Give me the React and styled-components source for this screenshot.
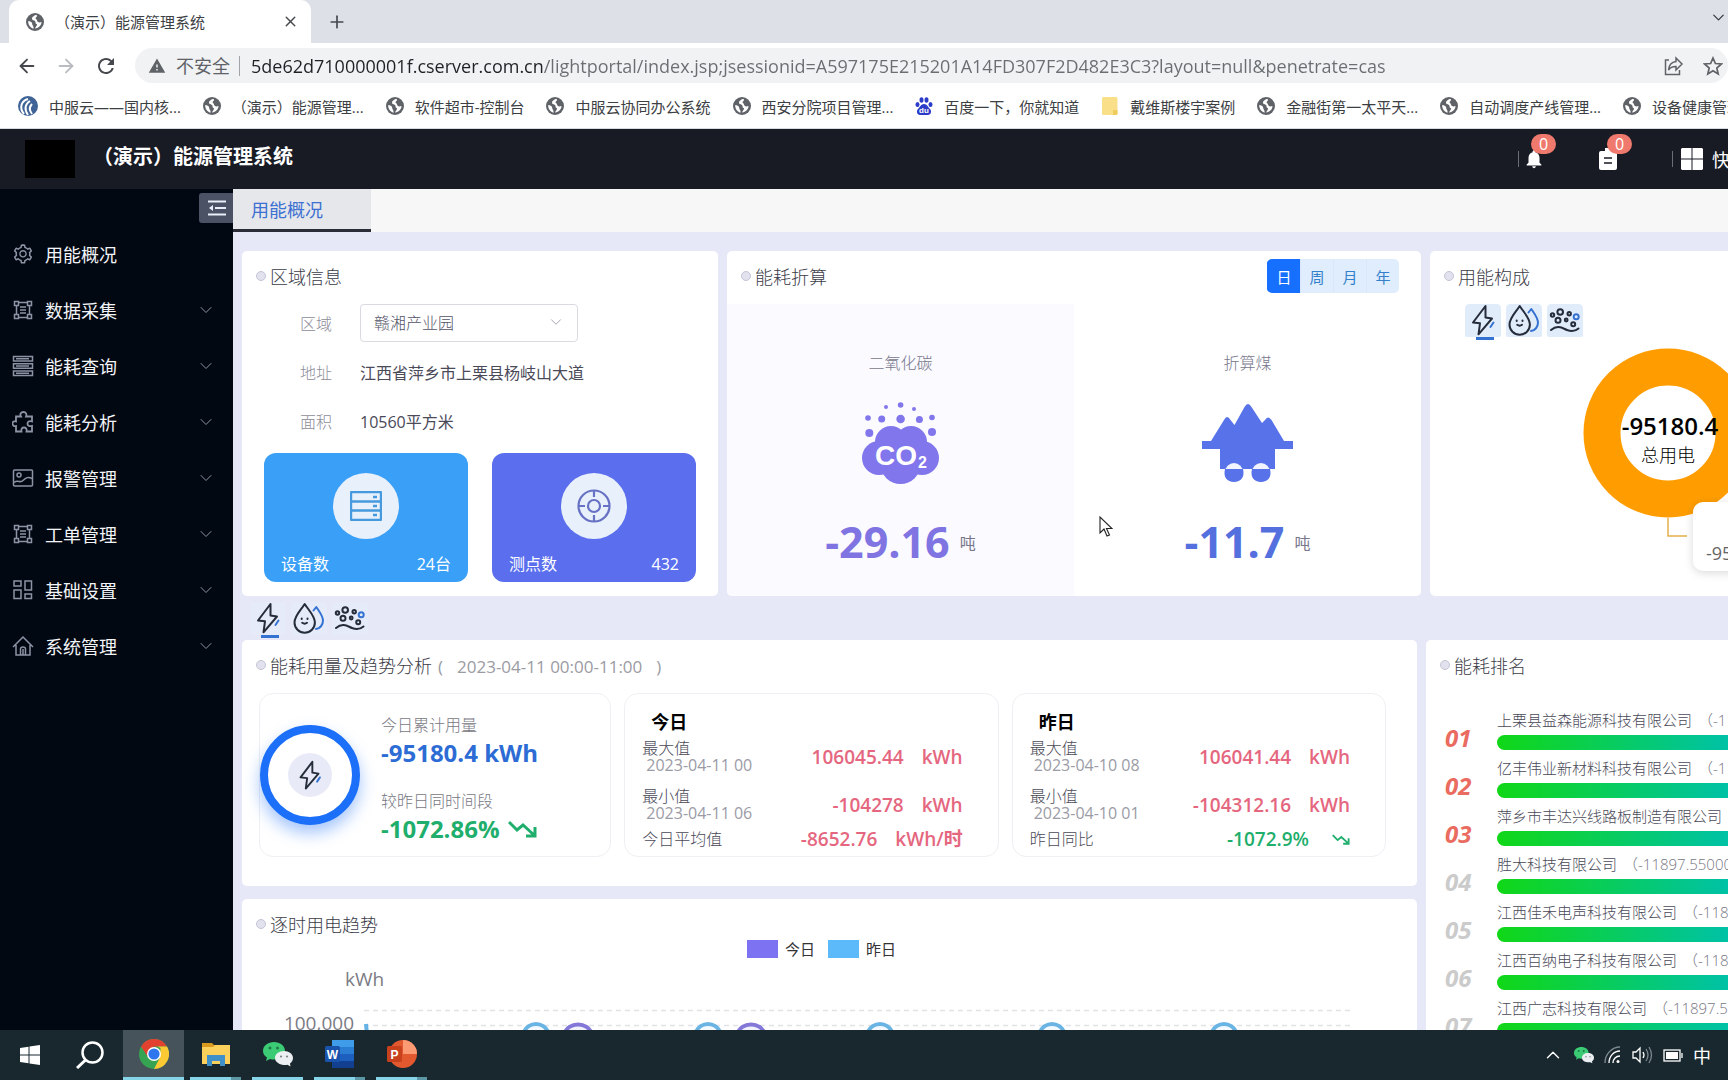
import styled, { createGlobalStyle, css } from "styled-components";
import { AiOutlineSetting } from "react-icons/ai";
import { FiArrowLeft, FiArrowRight, FiChevronDown, FiChevronUp, FiPlus, FiX } from "react-icons/fi";
import { MdRefresh, MdWarning, MdNotifications } from "react-icons/md";

const bookmarks = [
  { icon: "wave", text: "中服云——国内核..." },
  { icon: "globe", text: "（演示）能源管理..." },
  { icon: "globe", text: "软件超市-控制台" },
  { icon: "globe", text: "中服云协同办公系统" },
  { icon: "globe", text: "西安分院项目管理..." },
  { icon: "paw", text: "百度一下，你就知道" },
  { icon: "folder", text: "戴维斯楼宇案例" },
  { icon: "globe", text: "金融街第一太平天..." },
  { icon: "globe", text: "自动调度产线管理..." },
  { icon: "globe", text: "设备健康管理..." },
];

const menu = [
  { icon: "gear", text: "用能概况" },
  { icon: "frame", text: "数据采集", sub: true },
  { icon: "rows", text: "能耗查询", sub: true },
  { icon: "puzzle", text: "能耗分析", sub: true },
  { icon: "picture", text: "报警管理", sub: true },
  { icon: "frame", text: "工单管理", sub: true },
  { icon: "blocks", text: "基础设置", sub: true },
  { icon: "home", text: "系统管理", sub: true },
];

const ranking = [
  "上栗县益森能源科技有限公司",
  "亿丰伟业新材料科技有限公司",
  "萍乡市丰达兴线路板制造有限公司",
  "胜大科技有限公司",
  "江西佳禾电声科技有限公司",
  "江西百纳电子科技有限公司",
  "江西广志科技有限公司",
];

const today = [
  { label: "最大值", date: "2023-04-11 00", value: "106045.44", unit: "kWh" },
  { label: "最小值", date: "2023-04-11 06", value: "-104278", unit: "kWh" },
  { label: "今日平均值", value: "-8652.76", unit: "kWh/时" },
];

const yesterday = [
  { label: "最大值", date: "2023-04-10 08", value: "106041.44", unit: "kWh" },
  { label: "最小值", date: "2023-04-10 01", value: "-104312.16", unit: "kWh" },
  { label: "昨日同比", value: "-1072.9%", down: true },
];

// ***************** Icons
function Globe() {
  return (
    <svg width="18" height="18" viewBox="0 0 18 18">
      <circle cx="9" cy="9" r="9" fill="#5f6368" />
      <path d="M9 2c-1 1.500-3 1.500-3 3.500s2 1.500 3 2.500 0 2.500 1.500 3-.5 2.500-1.500 4.500c4-.3 6.500-3.500 6.500-6.500-1.500 0-2 1-3.500 0s-.5-2-2-3C8.500 5 11.500 4 11 2.300zM2.200 8c1.500 0 4 1 4 2.800S8 13 7.500 15.700C4 14.500 2 11.500 2.200 8z" fill="#fff" />
    </svg>
  );
}

function BookmarkIcon({ name }) {
  if (name === "wave") {
    return (
      <svg width="20" height="20" viewBox="0 0 20 20">
        <circle cx="10" cy="10" r="10" fill="#3f6396" />
        <path d="M6 18C1 12 3 5 10 3M10 19C6 13 7 8 12 5M14 18c-3-4-3-7 0-10" fill="none" stroke="#fff" strokeWidth="2" />
      </svg>
    );
  }
  if (name === "paw") {
    return (
      <svg width="18" height="18" viewBox="0 0 18 18" fill="#2c3bc8">
        <ellipse cx="2.500" cy="7.500" rx="2" ry="2.600" />
        <ellipse cx="6.500" cy="3" rx="2" ry="2.800" />
        <ellipse cx="11.500" cy="3" rx="2" ry="2.800" />
        <ellipse cx="15.500" cy="7.500" rx="2" ry="2.600" />
        <path d="M9 7c3 0 4 3 6 5s1 6-2 6H5c-3 0-4-4-2-6s3-5 6-5z" />
        <text x="9" y="16" textAnchor="middle" fontFamily="Liberation Sans" fontSize="8" fontWeight="700" fill="#fff">du</text>
      </svg>
    );
  }
  if (name === "folder") {
    return (
      <svg width="18" height="18" viewBox="0 0 18 18">
        <path d="M1 1.500Q1 0 2.500 0H15q1.500 0 1.500 1.500v15Q16.500 18 15 18H2.500Q1 18 1 16.500z" fill="#f9df88" />
        <path d="M12 13h4.500v3.500Q16.500 18 15 18h-3z" fill="#f0cc5e" />
      </svg>
    );
  }
  return <Globe />;
}

function MenuIcon({ name }) {
  if (name === "gear") return <AiOutlineSetting size={22} />;
  return (
    <svg width="22" height="22" viewBox="0 0 22 22" fill="none" stroke="currentColor" strokeWidth="1.500">
      {name === "frame" && (
        <path d="M2.500 2.500h4v4h-4zM15.500 2.500h4v4h-4zM2.500 15.500h4v4h-4zM15.500 15.500h4v4h-4zM6.500 3.500h9M6.500 18.500h9M4.500 6.500v9M17.500 6.500v9M8 8h6M8 11h6M8 14h6" />
      )}
      {name === "rows" && (
        <path d="M1.500 1.500h19v4.500h-19zM1.500 8.800h19v4.500h-19zM1.500 16h19v4.500h-19zM4 3.800h13M4 11h13M4 18.300h13" />
      )}
      {name === "puzzle" && (
        <path d="M4 5.500h5C7.500 3 9 1 11.500 1S15 3 14 5.500h6v5c-3-1-4.500.5-4.500 2.200s1.500 3 4.500 2.300v5.500h-5.500c.5-2.500-.5-4-2.500-4s-3 1.500-2.500 4H4V15c-2 .5-3.500-.5-3.500-2.500S2 10 4 10.500z" strokeWidth="1.800" />
      )}
      {name === "picture" && (
        <>
          <rect x="1.500" y="3" width="19" height="16" rx="1" />
          <circle cx="7" cy="8" r="2" />
          <path d="M2 15.500c4-3 6 1 9-2s5-4 9-2" />
        </>
      )}
      {name === "blocks" && (
        <path d="M2 2h7v5H2zM13 2h6.500v9H13zM2 11h7v8.500H2zM13 15h6.500v4.500H13z" />
      )}
      {name === "home" && (
        <path d="M1 12L11 2l10 10M4 10v10h14V10M8.500 20v-6q0-2 2.500-2t2.500 2v6M11 14v6" />
      )}
    </svg>
  );
}

function Bolt(props) {
  return (
    <svg width="36" height="33" viewBox="0 0 36 33" fill="none" strokeLinecap="round" strokeLinejoin="round" strokeWidth="2" {...props}>
      <path d="M20.500 2L8 18.500l7 .8-1.500 11L27 14.500l-6.500-1z" stroke="#252c3a" />
      <path d="M28.500 18.500l-3 4.500" stroke="#3472d2" />
    </svg>
  );
}

function Drops() {
  return (
    <svg width="36" height="33" viewBox="0 0 36 33" fill="none" strokeLinecap="round" strokeLinejoin="round" strokeWidth="2">
      <path d="M22.500 8.500L25.300 5C28 9 32 14 32 18.500 32 23 29 26.500 25 27" stroke="#3472d2" />
      <path d="M13.700 2C10 8 3.500 14 3.500 20.500a10.200 10.200 0 0 0 20.400 0C23.900 14 17.500 8 13.700 2z" stroke="#252c3a" />
      <path d="M10.700 16.500v.5M16.500 16.500v.5M11.200 20.800q2.500 1.800 4.800 0" stroke="#252c3a" />
    </svg>
  );
}

function Steam() {
  return (
    <svg width="36" height="33" viewBox="0 0 36 33" fill="none" strokeLinecap="round" stroke="#252c3a" strokeWidth="2">
      <circle cx="5.500" cy="11" r="1.700" />
      <circle cx="13.200" cy="8" r="2.800" />
      <circle cx="22.200" cy="9.700" r="1.700" />
      <circle cx="11" cy="16.300" r="2.500" />
      <circle cx="19.200" cy="16" r="1.400" />
      <circle cx="26.200" cy="20.300" r="2" />
      <circle cx="29.200" cy="12.700" r="2.500" stroke="#3472d2" />
      <path d="M4 26c7-6 12-1.500 16 0s8 1.500 11.500-1.500" />
    </svg>
  );
}

function Falling({ width, height }) {
  return (
    <svg width={width} height={height} viewBox="0 0 29 18" fill="none" stroke="#1fae6c" strokeWidth="3">
      <path d="M1 2l8 8 6-5 11 10M18 16h9V7" />
    </svg>
  );
}

function Carbon() {
  return (
    <svg width="77" height="83" viewBox="0 0 77 83" fill="#8176ec">
      <circle cx="24" cy="5" r="2" />
      <circle cx="38.600" cy="3" r="2.800" />
      <circle cx="52" cy="7" r="2" />
      <circle cx="6" cy="16" r="2.800" />
      <circle cx="19.700" cy="17" r="3.500" />
      <circle cx="38.600" cy="17" r="4.300" />
      <circle cx="57.400" cy="17.500" r="3.500" />
      <circle cx="70" cy="15.500" r="2.800" />
      <circle cx="7.300" cy="31" r="4" />
      <circle cx="70" cy="30" r="4" />
      <circle cx="29" cy="40" r="16" />
      <circle cx="49" cy="40" r="16" />
      <circle cx="17" cy="56" r="17" />
      <circle cx="60" cy="56" r="17" />
      <circle cx="38.500" cy="62" r="20" />
      <text x="13" y="63" fontFamily="Liberation Sans" fontWeight="700" fontSize="28" fill="#fff">CO</text>
      <text x="56" y="66" fontFamily="Liberation Sans" fontWeight="700" fontSize="16" fill="#fff">2</text>
    </svg>
  );
}

function Coal() {
  return (
    <svg width="91" height="79" viewBox="0 0 91 79" fill="#5873ea">
      <path d="M9 37l13-21q3-6 6.500 0l4 5L42.500 3q3.500-6 7 0L60 19l3-3q3-5 6.500 0L82 37h9v8H73v20H18V45H0v-8z" />
      <circle cx="32" cy="68" r="9" fill="#f1f4fe" />
      <circle cx="59" cy="68" r="9" fill="#f1f4fe" />
      <path d="M23 65h18c2 8-2 13-9 13s-11-5-9-13zM50 65h18c2 8-2 13-9 13s-11-5-9-13z" />
    </svg>
  );
}

function Server() {
  return (
    <svg width="32" height="30" viewBox="0 0 32 30" fill="none" stroke="#4699dc" strokeWidth="2.400">
      <rect x="1" y="1" width="30" height="28" rx="1" />
      <path d="M1 10.500h30M1 19.500h30M23 6h4M23 15h4M23 24h4" />
    </svg>
  );
}

function Target() {
  return (
    <svg width="34" height="34" viewBox="0 0 34 34" fill="none" stroke="#6872c4" strokeWidth="2.200">
      <circle cx="17" cy="17" r="15.500" />
      <circle cx="17" cy="17" r="6" />
      <path d="M17 1v7M17 26v7M1 17h7M26 17h7" />
    </svg>
  );
}

function WeChat({ size }) {
  return (
    <svg width={size} height={size} viewBox="0 0 30 30">
      <path d="M11 3c6 0 11 3.500 11 9s-5 8.500-11 8.500c-1.500 0-2.500 0-4-.5l-4 2 1-3.500C1.500 17 0 15 0 12c0-5.500 5-9 11-9z" fill="#3bcb75" />
      <path d="M21 12c5 0 9 3 9 7 0 2.500-1.500 4.500-3 5.500l.5 3-3-1.700c-6 1-12.500-1.800-12.500-6.800 0-4 4-7 9-7z" fill="#eceff1" />
      <circle cx="7" cy="9" r="1.500" fill="#1f7a48" />
      <circle cx="14.500" cy="9" r="1.500" fill="#1f7a48" />
      <circle cx="18" cy="17.500" r="1.100" fill="#7d8589" />
      <circle cx="24" cy="17.500" r="1.100" fill="#7d8589" />
    </svg>
  );
}

function Chrome() {
  return (
    <svg width="30" height="30" viewBox="0 0 30 30">
      <circle cx="15" cy="15" r="15" fill="#36a352" />
      <path d="M2 7.500A15 15 0 0 1 28 7.500H15L9 18z" fill="#e2412f" />
      <path d="M28 7.500A15 15 0 0 1 15 30l6-11.500L21.500 9l-3-1.500z" fill="#fbc934" />
      <circle cx="15" cy="15" r="7" fill="#fff" />
      <circle cx="15" cy="15" r="5.600" fill="#2d76ee" />
    </svg>
  );
}

function Explorer() {
  return (
    <svg width="28" height="24" viewBox="0 0 28 24">
      <path d="M0 1h10l2 2h2v4H0z" fill="#d99a1f" />
      <path d="M0 5h11l2-2h15v19H0z" fill="#fbd05b" />
      <path d="M5 24V13h18v11h-5v-5h-8v5z" fill="#3f8fc9" />
    </svg>
  );
}

function Office({ letter }) {
  const word = letter === "W";
  return (
    <svg width="30" height="28" viewBox="0 0 30 28">
      {word ? (
        <>
          <path d="M7 0h22v7H7z" fill="#3f9ce8" />
          <path d="M7 7h22v7H7z" fill="#2b7cd3" />
          <path d="M7 14h22v7H7z" fill="#1c5fbe" />
          <path d="M7 21h22v7H7z" fill="#123f8f" />
        </>
      ) : (
        <>
          <circle cx="16" cy="14" r="14" fill="#e2582f" />
          <path d="M16 0a14 14 0 0 1 14 14H16z" fill="#fb9a73" />
        </>
      )}
      <rect x="0" y="6" width="15" height="16" rx="1.500" fill={word ? "#1a53ab" : "#c8411d"} />
      <text x="7.500" y="18.500" textAnchor="middle" fontFamily="Liberation Sans" fontSize="12" fontWeight="700" fill="#fff">{letter}</text>
    </svg>
  );
}

// ***************** Parts
function EnergyTabs({ tinted }) {
  return (
    <TabList>
      <EnergyButton type="button" aria-label="电" $tinted={tinted} $active><Bolt /></EnergyButton>
      <EnergyButton type="button" aria-label="水" $tinted={tinted}><Drops /></EnergyButton>
      <EnergyButton type="button" aria-label="气" $tinted={tinted}><Steam /></EnergyButton>
    </TabList>
  );
}

function DayCard({ title, rows }) {
  return (
    <StatCard>
      <DayTitle>{title}</DayTitle>
      {rows.map((row) => (
        <StatRow key={row.label}>
          <StatLabel>
            {row.label}
            {row.date && <time>{row.date}</time>}
          </StatLabel>
          <StatValue $down={row.down}>
            <b>{row.value}</b>
            {row.down ? <Falling width={18} height={11} /> : <b>{row.unit}</b>}
          </StatValue>
        </StatRow>
      ))}
    </StatCard>
  );
}

function TrendChart() {
  return (
    <ChartSvg viewBox="0 0 1175 200">
      <g fontSize="19" fill="#7b7b85">
        <text x="103" y="37">kWh</text>
        <text x="112" y="81" textAnchor="end">100,000</text>
      </g>
      <g stroke="#e2e3e8" strokeWidth="1.500" strokeDasharray="5 4">
        <path d="M122 61.500h988M122 76.500h988" />
      </g>
      <path d="M124 75q1 10 6 60" fill="none" stroke="#62b2e6" strokeWidth="4" />
      {[294, 466, 638, 810, 982].map((x) => (
        <path key={x} d={`M${x - 24} 130L${x - 12} 83A13 13 0 0 1 ${x + 12} 83L${x + 24} 130`} fill="#f3f9fe" stroke="#6ab4e4" strokeWidth="4" />
      ))}
      {[336, 509].map((x) => (
        <path key={x} d={`M${x - 26} 130L${x - 14} 85A15 15 0 0 1 ${x + 14} 85L${x + 26} 130`} fill="#f1f1fc" stroke="#8378d8" strokeWidth="4" />
      ))}
    </ChartSvg>
  );
}

export default function App() {
  return (
    <Page>
      <GlobalStyle />

      <TabStrip>
        <BrowserTab>
          <Globe />
          <span>（演示）能源管理系统</span>
          <IconButton type="button" aria-label="关闭"><FiX size={17} /></IconButton>
        </BrowserTab>
        <IconButton type="button" aria-label="新标签页"><FiPlus size={20} /></IconButton>
        <FiChevronDown className="more" size={19} strokeWidth={1.5} />
      </TabStrip>

      <Toolbar>
        <IconButton type="button" aria-label="后退"><FiArrowLeft size={22} /></IconButton>
        <IconButton type="button" aria-label="前进" $muted><FiArrowRight size={22} /></IconButton>
        <IconButton type="button" aria-label="刷新"><MdRefresh size={24} /></IconButton>
        <AddressBar>
          <MdWarning size={18} />
          <label htmlFor="url">不安全</label>
          <input
            id="url"
            type="text"
            defaultValue="5de62d710000001f.cserver.com.cn/lightportal/index.jsp;jsessionid=A597175E215201A14FD307F2D482E3C3?layout=null&penetrate=cas"
          />
          <svg width="20" height="20" viewBox="0 0 20 20" fill="none" stroke="currentColor" strokeWidth="1.500">
            <path d="M5 4H1.500v14.500h14V14M12 2l6 6-6 6v-3.500c-4 0-6 1-7.500 3.500.5-5 3-8 7.500-8.500z" />
          </svg>
          <svg width="20" height="20" viewBox="0 0 20 20" fill="none" stroke="currentColor" strokeWidth="1.700">
            <path d="M10 2l2.400 5.500 6 .5-4.600 4 1.400 6-5.200-3.200L4.800 18l1.400-6L1.600 8l6-.5z" />
          </svg>
        </AddressBar>
      </Toolbar>

      <Bookmarks>
        {bookmarks.map((item) => (
          <a href="#" key={item.text}>
            <BookmarkIcon name={item.icon} />
            {item.text}
          </a>
        ))}
      </Bookmarks>

      <Header>
        <Logo />
        <h1>（演示）能源管理系统</h1>
        <HeaderTools>
          <Divider />
          <ToolButton type="button" aria-label="通知">
            <MdNotifications size={22} />
            <Badge>0</Badge>
          </ToolButton>
          <ToolButton type="button" aria-label="任务">
            <svg width="18" height="22" viewBox="0 0 18 22">
              <path d="M6 0h6v3h4q2 0 2 2v15q0 2-2 2H2q-2 0-2-2V5q0-2 2-2h4z" fill="#fff" />
              <path d="M5 10h8M5 15h8" stroke="#181b24" strokeWidth="1.700" />
            </svg>
            <Badge>0</Badge>
          </ToolButton>
          <Divider />
          <Shortcut href="#">
            <svg width="22" height="22" viewBox="0 0 22 22" fill="#fff">
              <path d="M1 0h9.500v10.500H0V1zM11.500 0H21l1 1v9.500H11.500zM0 11.500h10.500V22H1l-1-1zM11.500 11.500H22V21l-1 1h-9.500z" />
            </svg>
            快捷
          </Shortcut>
        </HeaderTools>
      </Header>

      <Body>
        <Sidebar>
          <Collapse type="button" aria-label="收起菜单">
            <svg width="18" height="16" viewBox="0 0 18 16" stroke="#e9eefa" strokeWidth="2.200">
              <path d="M0 1.500h18M7 8h11M0 14.500h18" />
              <path d="M1 8l4-3v6z" fill="#e9eefa" stroke="none" />
            </svg>
          </Collapse>
          <nav>
            {menu.map((item) => (
              <MenuItem href="#" key={item.text}>
                <MenuIcon name={item.icon} />
                <span>{item.text}</span>
                {item.sub && <FiChevronDown size={20} strokeWidth={1.2} />}
              </MenuItem>
            ))}
          </nav>
        </Sidebar>

        <Main>
          <PageTabs>
            <a href="#">用能概况</a>
          </PageTabs>

          <Dashboard>
            <TopRow>
              <Card>
                <CardTitle>区域信息</CardTitle>
                <InfoList>
                  <label htmlFor="area">区域</label>
                  <SelectBox>
                    <select id="area">
                      <option>赣湘产业园</option>
                    </select>
                    <FiChevronDown size={18} strokeWidth={1.3} />
                  </SelectBox>
                  <span>地址</span>
                  <p>江西省萍乡市上栗县杨岐山大道</p>
                  <span>面积</span>
                  <p>10560平方米</p>
                </InfoList>
                <Tiles>
                  <Tile $color="#399ff7">
                    <TileIcon><Server /></TileIcon>
                    <div><span>设备数</span><span>24台</span></div>
                  </Tile>
                  <Tile $color="#5b6fee">
                    <TileIcon><Target /></TileIcon>
                    <div><span>测点数</span><span>432</span></div>
                  </Tile>
                </Tiles>
              </Card>

              <Card>
                <CardHead>
                  <CardTitle>能耗折算</CardTitle>
                  <Periods>
                    <Period type="button" $active>日</Period>
                    <Period type="button">周</Period>
                    <Period type="button">月</Period>
                    <Period type="button">年</Period>
                  </Periods>
                </CardHead>
                <Conversion>
                  <ConvertItem $color="#7f74e2" $tinted>
                    <span>二氧化碳</span>
                    <Carbon />
                    <p><strong>-29.16</strong>吨</p>
                  </ConvertItem>
                  <ConvertItem $color="#546fde">
                    <span>折算煤</span>
                    <Coal />
                    <p><strong>-11.7</strong>吨</p>
                  </ConvertItem>
                </Conversion>
              </Card>

              <Card>
                <CardTitle>用能构成</CardTitle>
                <Composition>
                  <EnergyTabs tinted />
                  <Donut>
                    <svg width="200" height="210" viewBox="0 0 200 210">
                      <circle cx="100" cy="93" r="66" fill="none" stroke="#ff9d00" strokeWidth="37" />
                      <path d="M100 178v18h19" fill="none" stroke="#e5b04a" strokeWidth="1.500" />
                      <text x="102" y="95" textAnchor="middle" fontSize="24" fontWeight="600">-95180.4</text>
                      <text x="100" y="122" textAnchor="middle" fontSize="18" fontWeight="300">总用电</text>
                    </svg>
                    <Tooltip>-95180.4</Tooltip>
                  </Donut>
                </Composition>
              </Card>
            </TopRow>

            <Strip>
              <EnergyTabs />
            </Strip>

            <BottomRow>
              <Column>
                <Card>
                  <CardTitle>
                    能耗用量及趋势分析
                    <small><span>(</span><span>2023-04-11 00:00-11:00</span><span>)</span></small>
                  </CardTitle>
                  <Stats>
                    <Total>
                      <Ring><span><Bolt width="34" height="33" /></span></Ring>
                      <TotalText>
                        <span>今日累计用量</span>
                        <TotalValue $color="#2c6cd4">-95180.4 kWh</TotalValue>
                        <span>较昨日同时间段</span>
                        <TotalValue $color="#1fae6c">-1072.86% <Falling width={29} height={18} /></TotalValue>
                      </TotalText>
                    </Total>
                    <DayCard title="今日" rows={today} />
                    <DayCard title="昨日" rows={yesterday} />
                  </Stats>
                </Card>
                <Card>
                  <CardTitle>逐时用电趋势</CardTitle>
                  <Legend>
                    <LegendItem $color="#7c72f2">今日</LegendItem>
                    <LegendItem $color="#5cbafb">昨日</LegendItem>
                  </Legend>
                  <TrendChart />
                </Card>
              </Column>

              <Card>
                <CardTitle>能耗排名</CardTitle>
                <RankList>
                  {ranking.map((name, i) => (
                    <RankItem key={name} $top={i < 3}>
                      <b>{`0${i + 1}`}</b>
                      <div>
                        <p>{name}<span>（-11897.55000）</span></p>
                        <RankBar />
                      </div>
                    </RankItem>
                  ))}
                </RankList>
              </Card>
            </BottomRow>
          </Dashboard>
        </Main>
      </Body>

      <Taskbar>
        <TaskIcon type="button" aria-label="开始">
          <svg width="20" height="20" viewBox="0 0 20 20" fill="#fff">
            <path d="M0 3l8.500-1.300v7.800H0zM9.500 1.500L20 0v9.500H9.500zM0 10.500h8.500v7.800L0 17zM9.500 10.500H20V20L9.500 18.500z" />
          </svg>
        </TaskIcon>
        <TaskIcon type="button" aria-label="搜索">
          <svg width="28" height="28" viewBox="0 0 28 28" fill="none" stroke="#fff" strokeWidth="2.500">
            <circle cx="16.500" cy="11.500" r="10" />
            <path d="M9.500 19L1 27" strokeWidth="3" />
          </svg>
        </TaskIcon>
        <Apps>
          <AppButton type="button" aria-label="Chrome" $active><Chrome /></AppButton>
          <AppButton type="button" aria-label="Explorer" $stacked><Explorer /></AppButton>
          <AppButton type="button" aria-label="WeChat"><WeChat size={30} /></AppButton>
          <AppButton type="button" aria-label="Word" $stacked><Office letter="W" /></AppButton>
          <AppButton type="button" aria-label="PowerPoint" $stacked><Office letter="P" /></AppButton>
        </Apps>
        <Tray>
          <FiChevronUp size={22} strokeWidth={1.5} />
          <WeChat size={20} />
          <svg width="18" height="18" viewBox="0 0 18 18" fill="none" stroke="#fff" strokeWidth="1.400">
            <path d="M1 17C1 8 8 1 16 1" stroke="#7c888c" />
            <path d="M5 17C5 10 10 5 16 5M9 17c0-4 3-7 7-7" />
            <circle cx="14" cy="15.500" r="1.500" fill="#fff" stroke="none" />
          </svg>
          <svg width="21" height="18" viewBox="0 0 21 18" fill="none" stroke="#fff" strokeWidth="1.300">
            <path d="M1 6h3l4-4v14l-4-4H1zM11 6q2 3 0 6" />
            <path d="M14 3q4 6 0 12M17 1q5 8 0 16" stroke="#7c888c" />
          </svg>
          <svg width="20" height="13" viewBox="0 0 20 13" fill="none" stroke="#fff" strokeWidth="1.300">
            <rect x="1" y="1" width="16" height="11" />
            <path d="M3 3h12v7H3z" fill="#fff" stroke="none" />
            <path d="M19 4v5" />
          </svg>
          <span>中</span>
        </Tray>
      </Taskbar>

      <Cursor width="14" height="21" viewBox="0 0 14 21">
        <path d="M1 1v16l4-4 3 7 2.500-1-3-6.500H13z" fill="#fff" stroke="#222" strokeWidth="1.100" />
      </Cursor>
    </Page>
  );
}

// ***************** Component Styles
const GlobalStyle = createGlobalStyle`
  * {
    box-sizing: border-box;
  }

  body {
    margin: 0;
    overflow: hidden;
    font-family: "Open Sans", "Noto Sans CJK SC", sans-serif;
    font-size: 16px;
    color: #4a4a58;
  }

  h1, h2, h3, p {
    margin: 0;
    font-weight: 400;
  }

  a {
    color: inherit;
    text-decoration: none;
  }

  button, input, select {
    margin: 0;
    padding: 0;
    border: none;
    background: none;
    font: inherit;
    color: inherit;
  }

  svg {
    flex-shrink: 0;
  }
`

const Page = styled.div`
  height: 100vh;
  display: flex;
  flex-direction: column;
  overflow: hidden;
`

const IconButton = styled.button`
  display: flex;
  color: ${(props) => (props.$muted ? "#b9bcc0" : "#45484c")};
`

const TabStrip = styled.div`
  height: 43px;
  flex-shrink: 0;
  padding: 0 8px 0 9px;
  display: flex;
  align-items: center;
  gap: 16px;
  background-color: #dde0e7;

  .more {
    margin-left: auto;
    margin-right: -8px;
    margin-bottom: 8px;
    color: #33363b;
  }
`

const BrowserTab = styled.div`
  width: 302px;
  height: 100%;
  padding: 0 12px 0 17px;
  display: flex;
  align-items: center;
  border-radius: 10px 10px 0 0;
  background-color: #fff;
  font-size: 15px;
  color: #3c4043;

  span {
    flex: 1;
    margin-left: 11px;
  }
`

const Toolbar = styled.div`
  height: 45px;
  flex-shrink: 0;
  padding-left: 16px;
  display: flex;
  align-items: center;
  gap: 17px;
  background-color: #fff;
`

const AddressBar = styled.div`
  flex: 1;
  height: 35px;
  padding: 0 5px 0 13px;
  display: flex;
  align-items: center;
  border-radius: 18px;
  background-color: #f0f2f4;
  color: #5f6368;

  label {
    margin-left: 10px;
    padding-right: 9px;
    border-right: 1px solid #a0a3a7;
    font-size: 18px;
    line-height: 20px;
  }

  /* the host part of the address is darker than its path */
  input {
    flex: 1;
    min-width: 0;
    margin-left: 11px;
    outline: none;
    font-size: 18px;
    color: transparent;
    background: linear-gradient(90deg, #202124 292px, #6a6d71 292px);
    background-clip: text;
  }

  svg + svg {
    margin-left: 19px;
  }
`

const Bookmarks = styled.nav`
  height: 41px;
  flex-shrink: 0;
  padding: 0 0 4px 18px;
  display: flex;
  align-items: center;
  gap: 22px;
  border-bottom: 1px solid #d9dbe0;
  background-color: #fff;
  font-size: 15px;
  color: #3c4043;
  white-space: nowrap;
  overflow: hidden;

  a {
    display: flex;
    align-items: center;
    gap: 11px;
  }
`

const Header = styled.header`
  height: 60px;
  flex-shrink: 0;
  padding-left: 25px;
  display: flex;
  align-items: center;
  overflow: hidden;
  background-color: #181b24;
  color: #fff;

  h1 {
    margin: 0 0 7px 18px;
    font-size: 20px;
    font-weight: 700;
  }
`

const Logo = styled.div`
  width: 50px;
  height: 38px;
  background-color: #000;
`

const HeaderTools = styled.div`
  margin: 0 -20px 0 auto;
  display: flex;
  align-items: center;
`

const Divider = styled.span`
  width: 1px;
  height: 16px;
  margin-right: 4px;
  background-color: #6b6e77;
`

const ToolButton = styled.button`
  position: relative;
  width: 76px;
  display: flex;

  &:last-of-type {
    width: 73px;
  }
`

const Badge = styled.span`
  position: absolute;
  top: -14px;
  left: 8px;
  width: 25px;
  height: 20px;
  border-radius: 10px;
  background-color: #f0796d;
  font-size: 16px;
  line-height: 20px;
  text-align: center;
  color: #fff;
`

const Shortcut = styled.a`
  margin-left: 4px;
  display: flex;
  align-items: center;
  gap: 9px;
  font-size: 18px;
`

const Body = styled.div`
  flex: 1;
  min-height: 0;
  display: flex;
`

const Sidebar = styled.aside`
  width: 233px;
  flex-shrink: 0;
  padding-top: 4px;
  background-color: #020812;
`

const Collapse = styled.button`
  width: 34px;
  height: 30px;
  margin: 0 0 3px auto;
  padding-left: 2px;
  display: flex;
  align-items: center;
  justify-content: center;
  border-radius: 3px 0 0 3px;
  background-color: #4c5265;
`

const MenuItem = styled.a`
  height: 56px;
  padding: 0 17px 0 12px;
  display: flex;
  align-items: center;
  gap: 11px;
  font-size: 18px;
  color: #8d93a4;

  span {
    flex: 1;
    color: #f2f4f8;
  }
`

const Main = styled.main`
  flex: 1;
  min-width: 0;
  overflow: hidden;
  background-color: #e7e8f7;
`

const PageTabs = styled.div`
  height: 43px;
  display: flex;
  background-color: #f7f7f8;

  a {
    width: 138px;
    padding-left: 18px;
    border-bottom: 3px solid #2a2d38;
    background-color: #e6e7ea;
    font-size: 18px;
    line-height: 42px;
    color: #3c70d2;
  }
`

// wider than the space beside the menu on small screens, the rest is cut off
const Dashboard = styled.div`
  min-width: 1682px;
  padding: 19px 9px 0;
`

const TopRow = styled.div`
  height: 345px;
  display: grid;
  grid-template-columns: 476fr 694fr 476fr;
  gap: 9px;
`

const Card = styled.section`
  min-width: 0;
  border-radius: 5px;
  background-color: #fff;
  overflow: hidden;
`

const CardTitle = styled.h2`
  height: 50px;
  padding-left: 14px;
  display: flex;
  align-items: center;
  font-size: 18px;
  font-weight: 300;
  color: #3c3c48;

  &::before {
    content: "";
    width: 8px;
    height: 8px;
    margin-right: 4px;
    border: 1px solid #c4c4d6;
    border-radius: 50%;
    background-color: #e2e2ee;
  }

  small {
    margin: 3px 0 0 6px;
    display: flex;
    gap: 14px;
    font-size: 17px;
    font-weight: 400;
    color: #9b9ba3;
  }
`

const InfoList = styled.div`
  margin-top: -3px;
  padding-left: 58px;
  display: grid;
  grid-template-columns: 60px 1fr;
  grid-auto-rows: 49px;
  align-items: center;
  font-weight: 300;

  label, span {
    color: #8d8d99;
  }
`

const SelectBox = styled.div`
  position: relative;
  width: 218px;

  select {
    display: block;
    width: 100%;
    height: 38px;
    padding: 0 13px;
    border: 1px solid #d9dae2;
    border-radius: 4px;
    appearance: none;
    font-weight: 300;
    color: #525268;
  }

  svg {
    position: absolute;
    top: 9px;
    right: 13px;
    color: #a5a7b4;
  }
`

const Tiles = styled.div`
  padding: 8px 22px 0;
  display: grid;
  grid-template-columns: 1fr 1fr;
  gap: 24px;
`

const Tile = styled.div`
  height: 129px;
  padding: 20px 17px 6px;
  display: flex;
  flex-direction: column;
  justify-content: space-between;
  align-items: center;
  border-radius: 12px;
  background-color: ${(props) => props.$color};
  color: #fff;

  > div:last-child {
    width: 100%;
    display: flex;
    justify-content: space-between;
    line-height: 24px;
  }
`

const TileIcon = styled.div`
  width: 66px;
  height: 66px;
  display: flex;
  align-items: center;
  justify-content: center;
  border-radius: 50%;
  background-color: #e8f0fc;
`

const CardHead = styled.div`
  display: flex;
  justify-content: space-between;
  align-items: center;
  padding-right: 22px;
`

const Periods = styled.div`
  display: flex;
  border-radius: 5px;
  overflow: hidden;
`

const Period = styled.button`
  width: 33px;
  height: 34px;
  border-left: 1px solid #d8e7f9;
  background-color: #e0edfc;
  font-size: 15px;
  color: #3381cc;

  ${(props) => props.$active && css`
    border-color: #166ffd;
    background-color: #166ffd;
    color: #fff;
  `}
`

const Conversion = styled.div`
  height: 292px;
  margin-top: 3px;
  display: grid;
  grid-template-columns: 1fr 1fr;
`

const ConvertItem = styled.div`
  padding: 46px 0 24px;
  display: flex;
  flex-direction: column;
  align-items: center;
  justify-content: space-between;
  background-color: ${(props) => (props.$tinted ? "#fafaff" : "#fff")};
  font-weight: 300;
  color: #77778c;

  p {
    display: flex;
    align-items: center;
    gap: 10px;
  }

  strong {
    font-size: 43px;
    font-weight: 700;
    line-height: 60px;
    color: ${(props) => props.$color};
  }
`

const TabList = styled.div`
  display: flex;
  gap: 5px;
`

const EnergyButton = styled.button`
  width: 36px;
  height: 36px;
  border-bottom: 3px solid transparent;
  background: ${(props) => (props.$tinted ? "#e1ecfb" : "#e6ebf9")} padding-box;
  border-radius: 4px;

  svg {
    display: block;
  }

  ${(props) => props.$active && css`
    &::after {
      content: "";
      display: block;
      width: 18px;
      height: 3px;
      margin-left: 11px;
      background-color: #3472d2;
    }
  `}
`

const Composition = styled.div`
  padding: 3px 0 0 35px;
`

const Donut = styled.div`
  position: relative;
  width: 200px;
  margin-left: 103px;

  svg {
    display: block;
  }
`

const Tooltip = styled.div`
  position: absolute;
  top: 162px;
  left: 125px;
  width: 120px;
  height: 69px;
  padding: 38px 13px 0;
  border-radius: 10px;
  background-color: #fff;
  box-shadow: 0 2px 10px rgba(0, 0, 0, .15);
  font-size: 18px;
  line-height: 26px;
  color: #666;
`

const Strip = styled.div`
  height: 44px;
  padding: 6px 8px 0;
`

const BottomRow = styled.div`
  display: grid;
  grid-template-columns: 1175fr 480fr;
  gap: 9px;
`

const Column = styled.div`
  display: grid;
  grid-template-rows: 246px 1fr;
  gap: 13px;
`

const Stats = styled.div`
  height: 164px;
  margin: 3px 31px 0 17px;
  display: grid;
  grid-template-columns: 352fr 374fr 374fr;
  gap: 13px;
`

const StatCard = styled.div`
  padding: 16px 35px 0 17px;
  border: 1px solid #efeff4;
  border-radius: 14px;
`

const Total = styled(StatCard)`
  padding: 0;
  display: flex;
  align-items: center;
  gap: 21px;
`

const Ring = styled.div`
  width: 100px;
  height: 100px;
  display: flex;
  align-items: center;
  justify-content: center;
  border: 8px solid #1b6ff8;
  border-radius: 50%;
  box-shadow: 0 8px 16px rgba(27, 111, 248, .4);

  span {
    width: 44px;
    height: 44px;
    display: flex;
    align-items: center;
    justify-content: center;
    border-radius: 50%;
    background-color: #e8eaf8;
  }
`

const TotalText = styled.div`
  padding-top: 7px;
  line-height: 24px;
  font-weight: 300;
  color: #777782;
`

const TotalValue = styled.p`
  display: flex;
  align-items: center;
  gap: 8px;
  font-size: 24px;
  font-weight: 700;
  line-height: 32px;
  color: ${(props) => props.$color};

  & + span {
    display: block;
    margin-top: 20px;
  }
`

const DayTitle = styled.h3`
  padding-left: 9px;
  font-size: 18px;
  font-weight: 700;
  line-height: 24px;
  color: #000;
`

const StatRow = styled.div`
  height: 34px;
  margin-top: 6px;
  display: flex;
  align-items: center;
  justify-content: space-between;

  & + & {
    margin-top: 14px;
  }

  &:last-child {
    height: 20px;
    margin-top: 7px;
  }
`

const StatLabel = styled.div`
  line-height: 17px;
  font-weight: 300;

  time {
    display: block;
    padding-left: 4px;
    font-weight: 400;
    color: #9b9ba6;
  }
`

const StatValue = styled.div`
  display: flex;
  align-items: center;
  gap: ${(props) => (props.$down ? "23px" : "18px")};
  font-size: 19px;
  line-height: 20px;
  color: ${(props) => (props.$down ? "#1fae6c" : "#e5677f")};

  b {
    font-weight: 600;
  }
`

const Legend = styled.div`
  display: flex;
  justify-content: center;
  gap: 13px;
  margin: -12px 16px 0 0;
  font-size: 15px;
  line-height: 24px;
  color: #333;
`

const LegendItem = styled.span`
  display: flex;
  align-items: center;
  gap: 7px;

  &::before {
    content: "";
    width: 31px;
    height: 18px;
    background-color: ${(props) => props.$color};
  }
`

const ChartSvg = styled.svg`
  display: block;
  width: 100%;
  margin-top: -12px;
`

const RankList = styled.div`
  padding: 19px 30px 0 19px;
`

const RankItem = styled.div`
  height: 48px;
  display: flex;
  gap: 22px;

  > b {
    width: 30px;
    padding-top: 13px;
    font-size: 24px;
    line-height: 32px;
    font-style: italic;
    font-weight: 700;
    color: ${(props) => (props.$top ? "#ea6b60" : "#cbcbcb")};
  }

  > div {
    flex: 1;
    min-width: 0;
  }

  p {
    margin-bottom: 4px;
    font-size: 15px;
    font-weight: 300;
    line-height: 22px;
    white-space: nowrap;
  }

  span {
    margin-left: 6px;
    color: #777784;
  }
`

const RankBar = styled.div`
  height: 15px;
  border-radius: 8px;
  background-image: linear-gradient(90deg, #10d716, #00c2a4 60%, #00b4f0);
`

const Taskbar = styled.footer`
  position: relative;
  height: 50px;
  flex-shrink: 0;
  display: flex;
  background-color: #19282f;
`

const TaskIcon = styled.button`
  width: 60px;
  display: flex;
  align-items: center;
  justify-content: center;
`

const Apps = styled.div`
  display: flex;
  gap: 11px;
  padding-left: 3px;
`

const AppButton = styled.button`
  width: 51px;
  display: flex;
  align-items: center;
  justify-content: center;
  border-bottom: 3px solid #86d4e8;

  ${(props) => props.$stacked && css`
    border-image: linear-gradient(90deg, #86d4e8 80%, #5b97a5 80%) 1;
    border-width: 0 0 3px;
  `}

  ${(props) => props.$active && css`
    width: 61px;
    margin-right: -5px;
    background-color: #46535a;
  `}
`

const Tray = styled.div`
  margin-left: auto;
  padding-right: 17px;
  display: flex;
  align-items: center;
  gap: 10px;
  font-size: 18px;
  color: #fff;
`

const Cursor = styled.svg`
  position: fixed;
  left: 1099px;
  top: 516px;
`
